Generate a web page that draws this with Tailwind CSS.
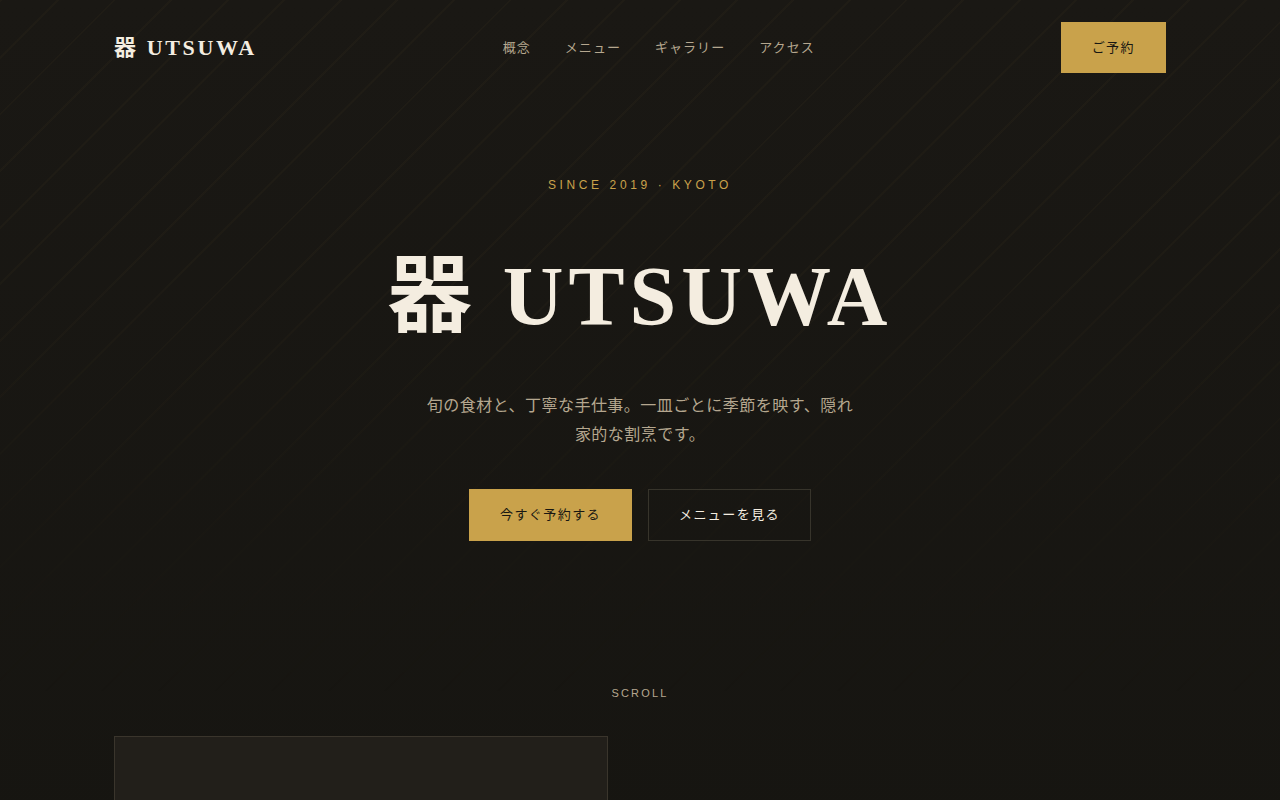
<!DOCTYPE html>
<html lang="ja">
<head>
  <meta charset="UTF-8" />
  <meta name="viewport" content="width=device-width, initial-scale=1.0" />
  <title>器 UTSUWA</title>
  <script src="https://cdn.jsdelivr.net/npm/@tailwindcss/browser@4"></script>
</head>
<body class="bg-[#161510] text-[#f4ede0] font-['Liberation_Sans','Noto_Sans_CJK_JP',sans-serif]">

  <div class="relative min-h-screen bg-linear-to-b from-[#1a1814] to-[#151410]">
    <!-- Diagonal lines, fading out downwards -->
    <div class="absolute inset-x-0 top-0 h-screen pointer-events-none bg-[repeating-linear-gradient(135deg,rgba(201,162,75,0.03)_0px,rgba(201,162,75,0.03)_2px,transparent_2px,transparent_40px)] mask-[linear-gradient(to_bottom,black_30%,transparent_90%)]"></div>

    <!-- Header -->
    <header class="sticky top-0 z-10">
      <div class="max-w-[1100px] mx-auto px-6 py-[22px] flex items-center justify-between">
        <a href="#" class="font-['Liberation_Serif','Noto_Sans_CJK_JP',serif] text-[22px] leading-10 font-bold tracking-[0.12em]">器 UTSUWA</a>
        <nav class="flex gap-[34px] text-[13px] tracking-[0.08em] text-[#b5a78f]">
          <a href="#concept">概念</a>
          <a href="#menu">メニュー</a>
          <a href="#gallery">ギャラリー</a>
          <a href="#access">アクセス</a>
        </nav>
        <button type="button" class="border border-[#c9a24b] bg-[#c9a24b] text-[#181712] px-[30px] py-[13px] text-[13px] leading-[23px] tracking-[0.11em]">ご予約</button>
      </div>
    </header>

    <main class="relative max-w-[1100px] mx-auto px-6">
      <!-- Hero -->
      <section class="pt-20 flex flex-col items-center text-center">
        <p class="text-xs leading-5 tracking-[0.3em] text-[#c9a24b]">SINCE 2019 · KYOTO</p>
        <h1 class="mt-14 font-['Liberation_Serif','Noto_Sans_CJK_JP',serif] text-[84px] leading-[92px] font-bold tracking-[0.06em]">器 UTSUWA</h1>
        <p class="mt-12 max-w-[440px] text-base leading-[29px] tracking-[0.03em] text-[#b5a78f]">旬の食材と、丁寧な手仕事。一皿ごとに季節を映す、隠れ家的な割烹です。</p>
        <div class="mt-10 flex gap-4 text-[13px] leading-6 tracking-[0.11em]">
          <button type="button" class="border border-[#c9a24b] bg-[#c9a24b] text-[#181712] px-[30px] py-[13px]">今すぐ予約する</button>
          <button type="button" class="border border-[#37342b] px-[30px] py-[13px]">メニューを見る</button>
        </div>
        <p class="mt-[141px] text-[11px] leading-[22px] tracking-[0.2em] text-[#b5a78f]">SCROLL</p>
      </section>

      <!-- Concept -->
      <section id="concept" class="mt-8 grid grid-cols-2 gap-16">
        <div class="aspect-[4/3] border border-[#3a352c] bg-[#221f1a]"></div>
      </section>
    </main>
  </div>

</body>
</html>
